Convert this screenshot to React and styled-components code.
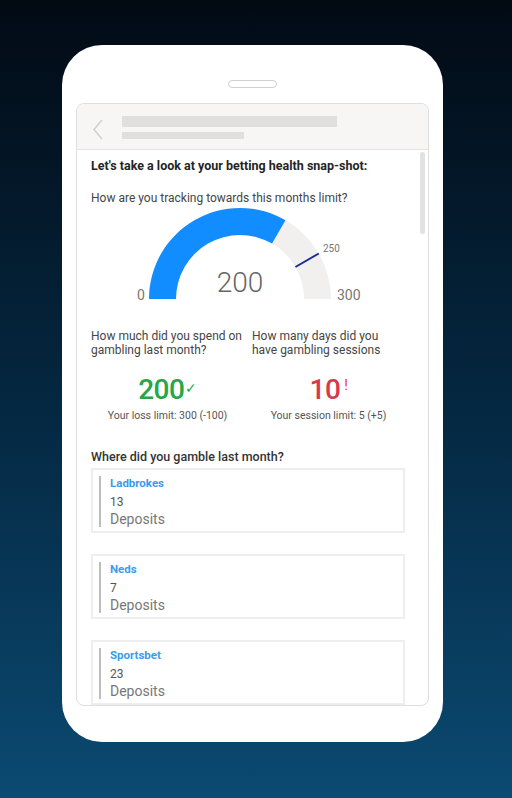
import styled, { createGlobalStyle } from "styled-components";

const GlobalStyle = createGlobalStyle`
  html, body {
    margin: 0;
    padding: 0;
  }
  body {
    font-family: Roboto, "Liberation Sans", sans-serif;
  }
`;

const Page = styled.div`
  width: 512px;
  height: 798px;
  background: linear-gradient(180deg, #020a14 0%, #052a45 55%, #0b4a72 100%);
  display: flex;
  justify-content: flex-start;
  padding: 45px 0 0 62px;
  box-sizing: border-box;
  overflow: hidden;
`;

const Phone = styled.div`
  width: 381px;
  height: 697px;
  background: #fff;
  border-radius: 40px;
  box-sizing: border-box;
  padding: 35px 14px 36px;
  display: flex;
  flex-direction: column;
  align-items: center;
`;

const Notch = styled.div`
  width: 47px;
  height: 6px;
  border: 1px solid #cfcfcf;
  border-radius: 4px;
  margin-bottom: 15px;
`;

const Screen = styled.div`
  width: 353px;
  flex: 1;
  border: 1px solid #dedede;
  border-radius: 8px;
  overflow: hidden;
  display: flex;
  flex-direction: column;
  box-sizing: border-box;
`;

const Header = styled.div`
  height: 46px;
  flex-shrink: 0;
  background: #f7f6f4;
  border-bottom: 1px solid #e4e4e2;
  display: flex;
  align-items: flex-start;
  padding: 12px 0 0 15px;
  box-sizing: border-box;
  gap: 18px;
`;

const Bars = styled.div`
  display: flex;
  flex-direction: column;
  gap: 5px;
`;

const Bar = styled.div`
  height: ${(p) => p.h}px;
  width: ${(p) => p.w}px;
  background: #e0dfdd;
`;

const Body = styled.div`
  flex: 1;
  display: flex;
  min-height: 0;
`;

const Content = styled.div`
  flex: 1;
  overflow: hidden;
  padding: 8px 0 0 14px;
`;

const Track = styled.div`
  width: 7px;
  padding-top: 2px;
  margin-right: 1px;
`;

const Thumb = styled.div`
  width: 5px;
  height: 82px;
  border-radius: 3px;
  background: #e2e2e2;
`;

const Title = styled.div`
  font-size: 12.5px;
  font-weight: 700;
  color: #252525;
  line-height: 16px;
`;

const Question = styled.div`
  font-size: 12px;
  color: #454545;
  line-height: 14px;
  margin-top: ${(p) => p.mt || 0}px;
`;

const GaugeSvg = styled.svg`
  display: block;
  margin: -4px 0 0 39px;
`;

const Stats = styled.div`
  display: grid;
  grid-template-columns: 153px 153px;
  column-gap: 8px;
  margin-top: 26px;
`;

const Stat = styled.div`
  display: flex;
  flex-direction: column;
`;

const BigNum = styled.div`
  align-self: center;
  margin-top: 18px;
  font-size: 28px;
  font-weight: 500;
  letter-spacing: -0.5px;
  line-height: 30px;
  color: ${(p) => p.color};
  display: flex;
  align-items: flex-start;
`;

const Mark = styled.span`
  font-size: ${(p) => p.size}px;
  line-height: 1;
  margin: ${(p) => p.m};
  font-weight: 400;
`;

const Sub = styled.div`
  text-align: center;
  font-size: 10.5px;
  line-height: 13px;
  color: #555;
  margin-top: 4px;
`;

const Section = styled.div`
  font-size: 12.5px;
  font-weight: 500;
  color: #333;
  margin-top: 27px;
  line-height: 16px;
`;

const Cards = styled.div`
  display: flex;
  flex-direction: column;
  gap: 21px;
  margin-top: 3px;
  width: 314px;
`;

const Card = styled.div`
  border: 2px solid #eeeeee;
  height: 65px;
  box-sizing: border-box;
  padding: 6px 0 0 6px;
  display: flex;
  gap: 9px;
`;

const Accent = styled.div`
  width: 2px;
  height: 51px;
  background: #bdbdbd;
`;

const CardText = styled.div`
  display: flex;
  flex-direction: column;
`;

const Name = styled.div`
  font-size: 11.5px;
  font-weight: 700;
  color: #3a9bef;
  line-height: 14px;
`;

const Count = styled.div`
  font-size: 12px;
  color: #555;
  line-height: 14px;
  margin-top: 5px;
`;

const Label = styled.div`
  font-size: 14px;
  color: #777;
  line-height: 18px;
  margin-top: 1px;
`;

const sites = [
  { name: "Ladbrokes", count: 13 },
  { name: "Neds", count: 7 },
  { name: "Sportsbet", count: 23 },
];

function Gauge() {
  const cx = 110;
  const cy = 98;
  const R = 91;
  const r = 64;
  const pt = (rad, frac) => {
    const a = Math.PI * (1 - frac);
    return [cx + rad * Math.cos(a), cy - rad * Math.sin(a)];
  };
  const [ox, oy] = pt(R, 200 / 300);
  const [ix, iy] = pt(r, 200 / 300);
  const [t1x, t1y] = pt(r, 250 / 300);
  const [t2x, t2y] = pt(R, 250 / 300);
  return (
    <GaugeSvg width="240" height="102" viewBox="0 0 240 102">
      <path
        d={`M ${cx - R} ${cy} A ${R} ${R} 0 0 1 ${cx + R} ${cy} L ${cx + r} ${cy} A ${r} ${r} 0 0 0 ${cx - r} ${cy} Z`}
        fill="#f1f0ef"
      />
      <path
        d={`M ${cx - R} ${cy} A ${R} ${R} 0 0 1 ${ox} ${oy} L ${ix} ${iy} A ${r} ${r} 0 0 0 ${cx - r} ${cy} Z`}
        fill="#118dff"
      />
      <line x1={t1x} y1={t1y} x2={t2x} y2={t2y} stroke="#1c2a94" strokeWidth="2" />
      <text x="7" y="99" fontSize="14" fill="#777" fontFamily="Roboto, sans-serif">0</text>
      <text x="207" y="99" fontSize="14" fill="#777" fontFamily="Roboto, sans-serif">300</text>
      <text x="193" y="51" fontSize="10" fill="#777" fontFamily="Roboto, sans-serif">250</text>
      <text
        x={cx}
        y="91"
        fontSize="28"
        fill="#666"
        textAnchor="middle"
        fontWeight="300"
        fontFamily="Roboto, sans-serif"
      >
        200
      </text>
    </GaugeSvg>
  );
}

export default function App() {
  return (
    <Page>
      <GlobalStyle />
      <Phone>
        <Notch />
        <Screen>
          <Header>
            <svg width="12" height="22" viewBox="0 0 12 22" style={{ marginTop: 3 }}>
              <path d="M10 1 L2 10.5 L10 20" fill="none" stroke="#cfcfcf" strokeWidth="1.5" />
            </svg>
            <Bars>
              <Bar w={215} h={11} />
              <Bar w={122} h={7} />
            </Bars>
          </Header>
          <Body>
            <Content>
              <Title>Let's take a look at your betting health snap-shot:</Title>
              <Question mt={17}>How are you tracking towards this months limit?</Question>
              <Gauge />
              <Stats>
                <Stat>
                  <Question>How much did you spend on gambling last month?</Question>
                  <BigNum color="#23a845">
                    200
                    <Mark size={14} m="6px 0 0 1px">✓</Mark>
                  </BigNum>
                  <Sub>Your loss limit: 300 (-100)</Sub>
                </Stat>
                <Stat>
                  <Question>How many days did you have gambling sessions</Question>
                  <BigNum color="#d9394b">
                    10
                    <Mark size={14} m="3px 0 0 4px">!</Mark>
                  </BigNum>
                  <Sub>Your session limit: 5 (+5)</Sub>
                </Stat>
              </Stats>
              <Section>Where did you gamble last month?</Section>
              <Cards>
                {sites.map((s) => (
                  <Card key={s.name}>
                    <Accent />
                    <CardText>
                      <Name>{s.name}</Name>
                      <Count>{s.count}</Count>
                      <Label>Deposits</Label>
                    </CardText>
                  </Card>
                ))}
              </Cards>
            </Content>
            <Track>
              <Thumb />
            </Track>
          </Body>
        </Screen>
      </Phone>
    </Page>
  );
}
